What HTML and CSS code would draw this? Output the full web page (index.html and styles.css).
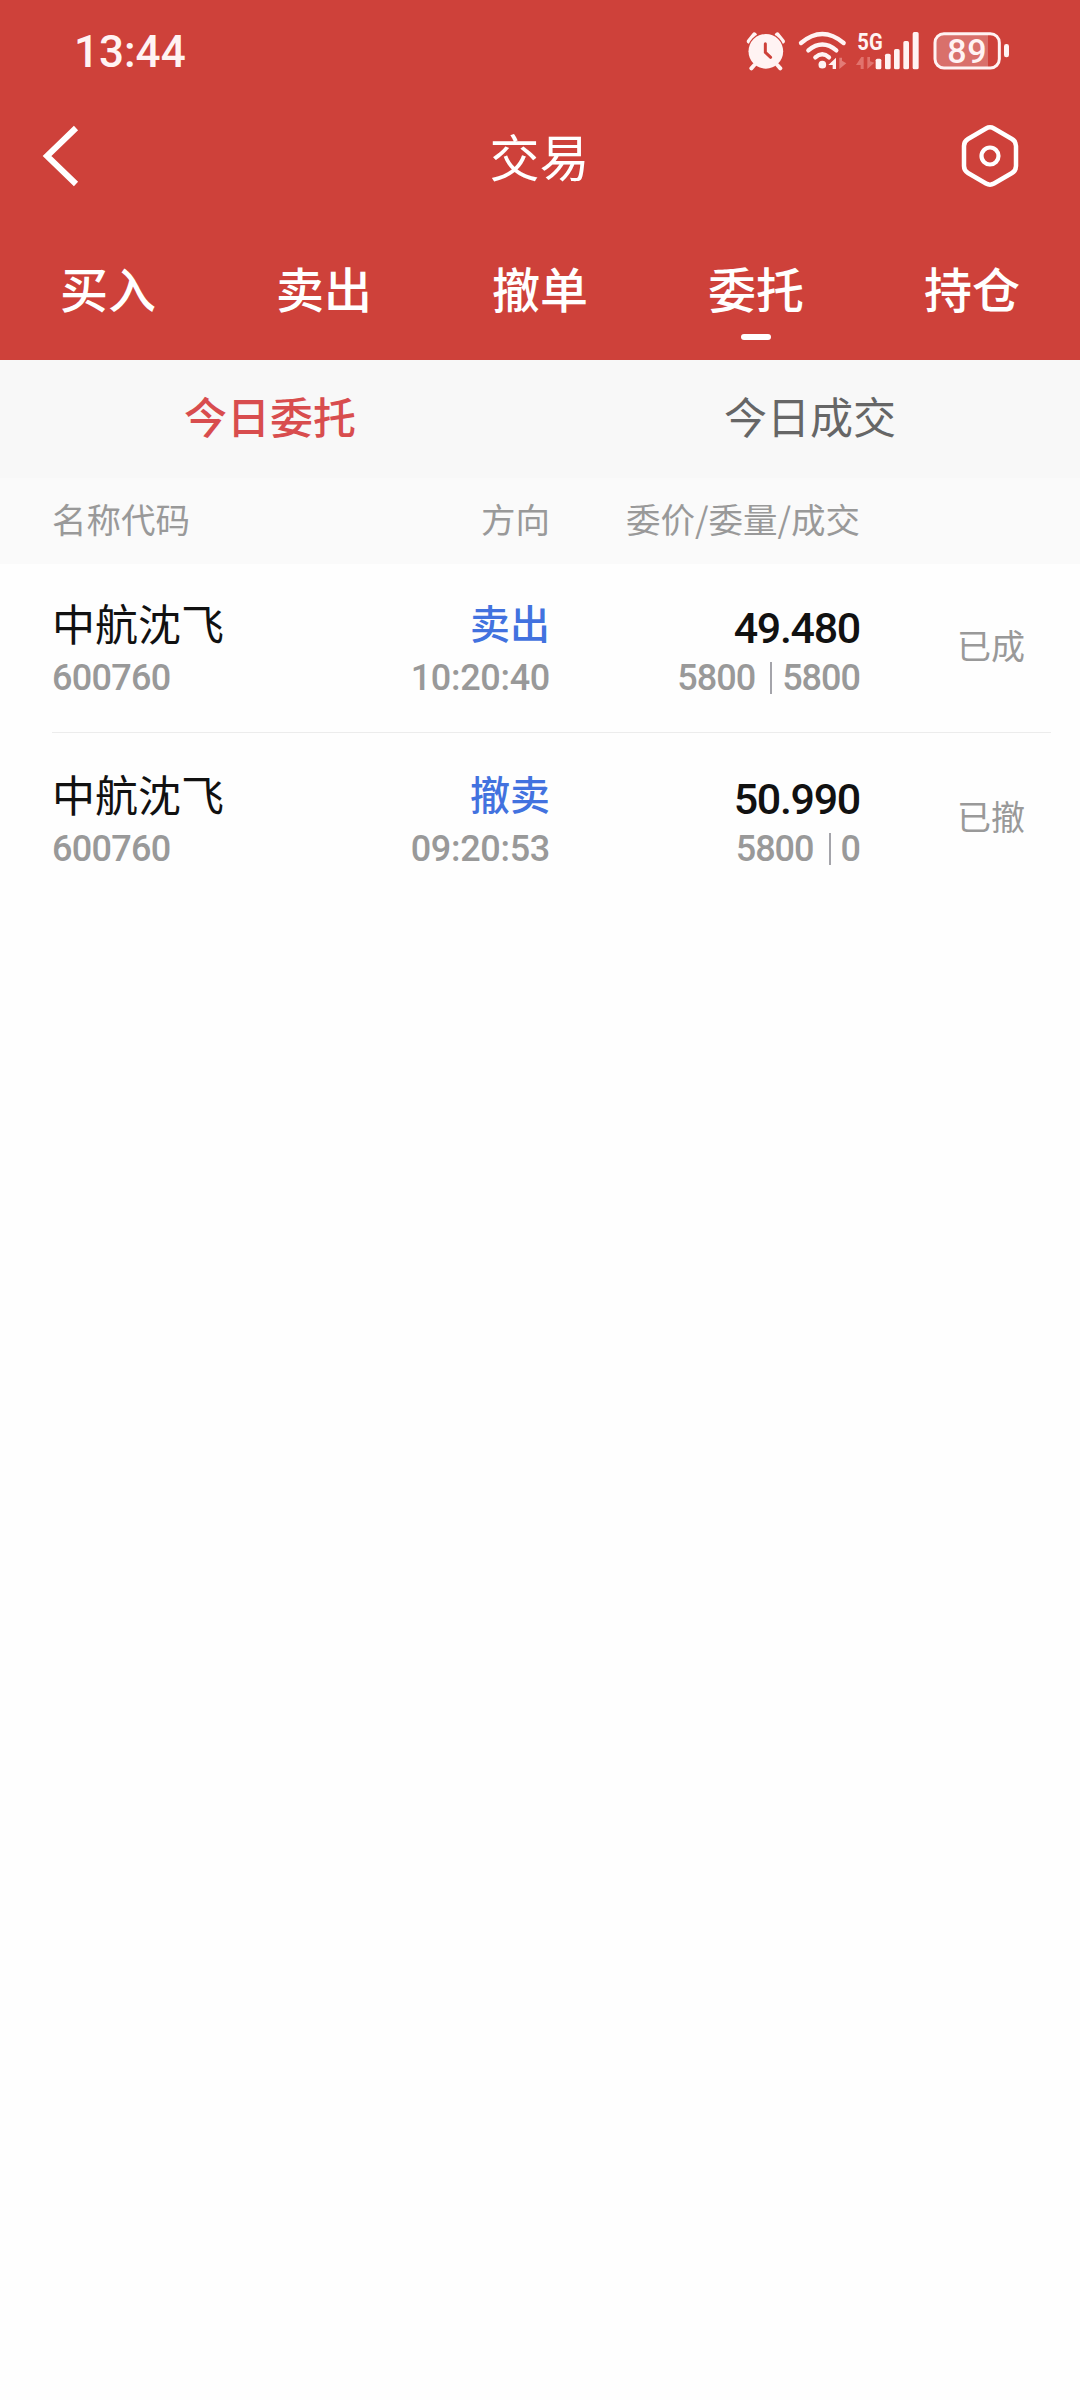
FILE: index.html
```html
<!DOCTYPE html>
<html lang="zh-CN">
<head>
<meta charset="utf-8">
<title>交易</title>
<link rel="stylesheet" href="styles.css">
</head>
<body>
<header class="top">
  <div class="status">
    <span class="clock">13:44</span>
    <div class="indicators">
      <svg class="alarm" width="40" height="42" viewBox="47 33 120 126">
        <path d="M57 64L72 45M156 64L141 45" stroke="#fff3f3" stroke-width="15" stroke-linecap="round"/>
        <circle cx="106.500" cy="94" r="56" fill="#ce413a"/>
        <path d="M72 135L63 145M141 135L150 145" stroke="#fff3f3" stroke-width="12" stroke-linecap="round"/>
        <circle cx="106.500" cy="94" r="52" fill="#fff3f3"/>
        <path d="M105 71V97L121 112" fill="none" stroke="#ce413a" stroke-width="9" stroke-linecap="round"/>
      </svg>
      <svg class="wifi" width="52" height="42" viewBox="200 33 156 126">
        <g fill="none" stroke="#fff3f3" stroke-width="13" stroke-linecap="round">
          <path d="M212 69Q276 15 340 69"/>
          <path d="M234 91Q276 56 318 91"/>
          <path d="M255 112Q276 94 296 112"/>
        </g>
        <circle cx="276" cy="134" r="11.500" fill="#fff3f3"/>
        <path d="M317 113V147H307V135H294Z" fill="#fff3f3"/>
        <path d="M327 147V113H335V122L348 130Z" fill="#e37b76"/>
      </svg>
      <svg class="signal" width="66" height="42" viewBox="374 33 198 126">
        <text x="381" y="91" class="network" textLength="76" lengthAdjust="spacingAndGlyphs">5G</text>
        <path d="M400 111V147H391V135H377L393 111ZM411 147V111H419V124L432 128Z" fill="#e1736d"/>
        <g fill="#fff3f3">
          <rect x="436" y="116" width="17" height="32" rx="5"/>
          <rect x="464" y="101" width="17" height="47" rx="5"/>
          <rect x="491" y="87" width="17" height="61" rx="5"/>
          <rect x="519" y="63" width="17" height="85" rx="5"/>
          <rect x="547" y="36" width="18" height="112" rx="5"/>
        </g>
      </svg>
      <svg class="battery" width="78" height="42" viewBox="606 33 234 126">
        <path d="M640 42H774V142H640Q617 142 617 119V65Q617 42 640 42Z" fill="#d9706b"/>
        <rect x="615" y="41" width="193" height="103" rx="27" fill="none" stroke="#fff3f3" stroke-width="9"/>
        <rect x="822" y="72" width="15" height="40" rx="7" fill="#fff3f3"/>
        <text x="652" y="128" class="level" textLength="118">89</text>
      </svg>
    </div>
  </div>
  <div class="titlebar">
    <svg class="back" width="44" height="64" viewBox="0 0 44 64"><path d="M36 4L7 32L36 60" fill="none" stroke="#fff" stroke-width="6"/></svg>
    <h1 class="title">交易</h1>
    <svg class="settings" width="60" height="66" viewBox="0 0 60 66">
      <path d="M26 5.500Q30 3.200 34 5.500L52 16Q56 18.400 56 23V43Q56 47.600 52 50L34 60.500Q30 62.800 26 60.500L8 50Q4 47.600 4 43V23Q4 18.400 8 16Z" fill="none" stroke="#fff" stroke-width="4.500"/>
      <circle cx="30" cy="33" r="8.500" fill="none" stroke="#fff" stroke-width="4.200"/>
    </svg>
  </div>
  <nav class="tabs">
    <a class="tab">买入</a>
    <a class="tab">卖出</a>
    <a class="tab">撤单</a>
    <a class="tab active">委托</a>
    <a class="tab">持仓</a>
  </nav>
</header>
<nav class="subtabs">
  <a class="subtab current">今日委托</a>
  <a class="subtab">今日成交</a>
</nav>
<main>
  <div class="columns head">
    <span>名称代码</span>
    <span class="right">方向</span>
    <span class="right">委价/委量/成交</span>
  </div>
  <div class="columns order">
    <div><div class="name">中航沈飞</div><div class="sub code">600760</div></div>
    <div class="right"><div class="side">卖出</div><div class="sub time">10:20:40</div></div>
    <div class="right"><div class="price">49.480</div><div class="sub qty"><span>5800</span><i class="bar"></i><span>5800</span></div></div>
    <div class="state">已成</div>
  </div>
  <div class="columns order">
    <div><div class="name">中航沈飞</div><div class="sub code">600760</div></div>
    <div class="right"><div class="side">撤卖</div><div class="sub time">09:20:53</div></div>
    <div class="right"><div class="price">50.990</div><div class="sub qty"><span>5800</span><i class="bar"></i><span>0</span></div></div>
    <div class="state">已撤</div>
  </div>
</main>
</body>
</html>
```
FILE: styles.css
```css
* { box-sizing: border-box; }
body {
  margin: 0;
  min-height: 2400px;
  background: #fefefe;
  color: #111;
  font-family: "Noto Sans CJK SC", sans-serif;
}
.top { height: 360px; background: #ce413a; color: #fff; }
.status {
  height: 102px;
  padding: 1px 70px 0 74px;
  display: flex;
  align-items: center;
  justify-content: space-between;
}
.clock { color: #fff3f3; font: 500 44px/60px Roboto, sans-serif; letter-spacing: 0; }
.indicators { display: flex; }
.indicators svg { overflow: visible; }
.wifi { margin-left: 11px; }
.signal { margin-left: 6px; }
.battery { margin-left: 11px; }
.network { font: 700 74px Roboto, sans-serif; fill: #fff3f3; }
.level { font: 500 102px Roboto, sans-serif; fill: #fff3f3; }
.titlebar {
  height: 108px;
  padding: 0 60px 0 40px;
  display: grid;
  grid-template-columns: 79px 1fr 60px;
  align-items: center;
}
.title { margin: 0; padding-bottom: 2px; font-size: 50px; line-height: 72px; font-weight: 400; text-align: center; }
.tabs { height: 150px; display: flex; }
.tab {
  flex: 1;
  padding-top: 42px;
  display: flex;
  flex-direction: column;
  align-items: center;
  font-size: 48px;
  line-height: 70px;
  font-weight: 500;
}
.active::after { content: ""; width: 30px; height: 6px; margin-top: 12px; border-radius: 3px; background: #fff; }
.subtabs { height: 118px; padding-bottom: 8px; display: flex; align-items: center; background: #f8f8f8; }
.subtab { flex: 1; text-align: center; font-size: 43px; line-height: 64px; color: #666; }
.current { color: #d84d4e; font-weight: 500; }
.columns { display: grid; grid-template-columns: 240px 258px 310px 1fr; }
.right { text-align: right; }
.head {
  height: 86px;
  padding: 0 29px 6px 52px;
  align-items: center;
  background: #fafafa;
  color: #999;
  font-size: 34.5px;
  line-height: 50px;
}
.order {
  height: 171px;
  margin: 0 29px 0 52px;
  padding-bottom: 28px;
  align-items: end;
}
.head + .order { height: 169px; border-bottom: 1px solid #ececec; }
.order:last-child { padding-bottom: 29px; }
.name, .side { font-size: 43px; line-height: 60px; }
.side { font-size: 40px; font-weight: 500; color: #4272df; }
.price { font: 500 43px/48px Roboto, sans-serif; padding-top: 12px; letter-spacing: -1.3px; }
.sub { height: 52px; color: #999; font: 500 36px/52px Roboto, sans-serif; }
.code { letter-spacing: -0.7px; }
.time { letter-spacing: -0.3px; }
.qty { display: flex; align-items: center; justify-content: flex-end; letter-spacing: -1px; }
.bar { width: 2px; height: 32px; margin: 0 10px 0 15px; background: #a4a4aa; }
.state { padding: 0 0 34px 97px; color: #999; font-size: 34px; line-height: 50px; }
```
